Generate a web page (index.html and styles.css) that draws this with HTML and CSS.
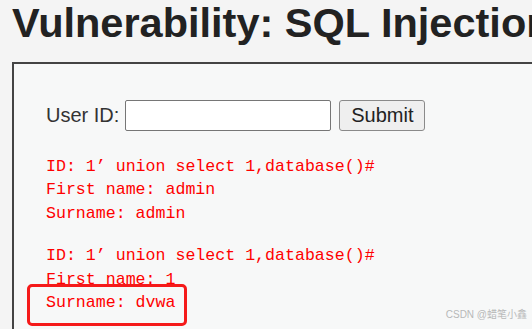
FILE: index.html
```html
<!DOCTYPE html>
<html lang="en">
<head>
    <meta charset="UTF-8">
    <meta name="viewport" content="width=device-width, initial-scale=1.0">
    <title>Vulnerability: SQL Injection</title>
    <link rel="stylesheet" href="styles.css">
</head>
<body>
    <h1>Vulnerability: SQL Injection</h1>

    <div class="vulnerable-code-area">
        <form class="id-form" action="#" method="GET">
            <label for="userId">User ID:</label>
            <input type="text" id="userId" name="id">
            <button type="submit" name="Submit">Submit</button>
        </form>
        <pre>ID: 1’ union select 1,database()#
First name: admin
Surname: admin</pre>
        <pre>ID: 1’ union select 1,database()#
First name: 1
Surname: dvwa</pre>
    </div>

    <!-- annotation over the screenshot -->
    <div class="highlight"></div>
    <div class="watermark">CSDN @蜡笔小鑫</div>
</body>
</html>
```

FILE: styles.css
```css
body {
    margin: 0;
    background: #f4f4f4;
    font-family: "Liberation Sans", Arial, sans-serif;
    color: #222;
    overflow: hidden;
    position: relative;
    width: 532px;
    height: 329px;
}
h1 {
    font-size: 41.5px;
    line-height: 45px;
    margin: 0 0 17px 12px;
    white-space: nowrap;
    color: #222;
}
.vulnerable-code-area {
    margin-left: 12px;
    width: 700px;
    background: #f7f8f8;
    border: 2px solid #444;
    padding: 36px 32px 20px;
}
.id-form {
    display: flex;
    align-items: center;
    gap: 6px;
    font-size: 20px;
    color: #333;
}
.id-form input {
    width: 206px;
    height: 31px;
    box-sizing: border-box;
    border: 1px solid #767676;
    border-radius: 2px;
    background: #fff;
    margin: 0 2px 0 0;
}
.id-form button {
    width: 86px;
    height: 31px;
    font-family: "Liberation Sans", Arial, sans-serif;
    font-size: 20px;
    color: #222;
    background: #efefef;
    border: 1px solid #8a8a8a;
    border-radius: 3px;
    padding: 0;
}
pre {
    font-family: "Liberation Mono", "Courier New", monospace;
    font-size: 16.6px;
    line-height: 23.4px;
    color: #f00;
    margin: 24px 0 0;
}
pre + pre {
    margin-top: 19px;
}
.highlight {
    position: absolute;
    left: 27px;
    top: 284px;
    width: 154px;
    height: 36px;
    border: 3px solid #f51a1a;
    border-radius: 5px;
}
.watermark {
    position: absolute;
    right: 5px;
    bottom: 8px;
    font-family: "Liberation Sans", "Noto Sans CJK SC", sans-serif;
    font-size: 10px;
    color: #b8b8b8;
}
```
